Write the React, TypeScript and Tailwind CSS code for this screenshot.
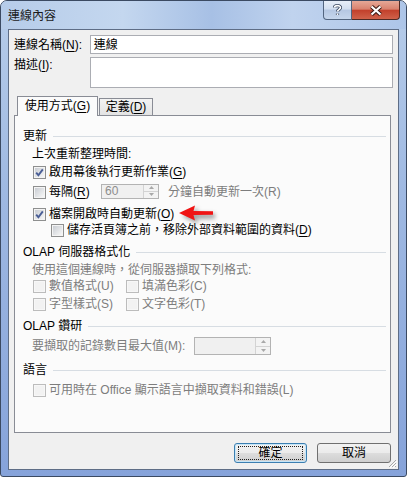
import React from "react";

function Mn({ children }: { children: React.ReactNode }) {
  return <span className="underline underline-offset-[2px]">{children}</span>;
}

function Box({ checked = false, disabled = false }: { checked?: boolean; disabled?: boolean }) {
  return (
    <span
      className={`flex h-[13px] w-[13px] shrink-0 items-center justify-center border bg-white ${
        disabled ? "border-[#bcbcbc]" : "border-[#8e8f8f]"
      }`}
    >
      <span
        className={`flex h-[11px] w-[11px] items-center justify-center border ${
          disabled
            ? "border-[#f7f7f7] bg-[#f2f2f2]"
            : "border-[#f4f4f4] bg-[linear-gradient(135deg,#c9cdd3,#f7f7f7)]"
        }`}
      >
        {checked ? (
          <svg width="9" height="9" viewBox="0 0 9 9">
            <path d="M1.2 4.6 L3.4 7.2 L7.8 1.4" stroke="#4a5e96" strokeWidth="1.9" fill="none" />
          </svg>
        ) : null}
      </span>
    </span>
  );
}

function Spin({ size, value }: { size: string; value?: string }) {
  return (
    <div className={`flex border border-[#b3b3b3] bg-[#f0f0f0] ${size}`}>
      <div className="flex flex-1 items-center pl-[3px] text-[#8d8d8d]">{value}</div>
      <div className="flex w-[15px] flex-col border-l border-[#d3d3d3] bg-[#f3f3f3]">
        <div className="flex flex-1 items-center justify-center border-b border-[#d3d3d3]">
          <svg width="5" height="3" viewBox="0 0 5 3">
            <path d="M0 3 L2.5 0 L5 3 Z" fill="#a8a8a8" />
          </svg>
        </div>
        <div className="flex flex-1 items-center justify-center">
          <svg width="5" height="3" viewBox="0 0 5 3">
            <path d="M0 0 L2.5 3 L5 0 Z" fill="#a8a8a8" />
          </svg>
        </div>
      </div>
    </div>
  );
}

function Group({ title, className = "" }: { title: string; className?: string }) {
  return (
    <div className={`flex h-[16px] items-center ${className}`}>
      <span>{title}</span>
      <span className="ml-[6px] mr-[4px] h-px flex-1 bg-[#d7dde3]" />
    </div>
  );
}

function CheckRow({
  checked,
  disabled,
  children,
  className = ""
}: {
  checked?: boolean;
  disabled?: boolean;
  children: React.ReactNode;
  className?: string;
}) {
  return (
    <div className={`flex h-[16px] items-center gap-[3px] ${disabled ? "text-[#7d7d7d]" : ""} ${className}`}>
      <Box checked={checked} disabled={disabled} />
      <span>{children}</span>
    </div>
  );
}

function DlgButton({ children, primary = false }: { children: React.ReactNode; primary?: boolean }) {
  return (
    <button
      type="button"
      className={`flex h-[20px] items-center justify-center rounded-[3px] border bg-[linear-gradient(#f2f2f2_0%,#ebebeb_50%,#dddddd_51%,#cfcfcf_100%)] ${
        primary ? "w-[73px] border-[#3c7fb1] shadow-[inset_0_0_0_1px_#c6e6f8]" : "w-[74px] border-[#707070]"
      }`}
    >
      {primary ? (
        <span className="flex h-[14px] w-[65px] items-center justify-center border border-dotted border-[#202020]">
          {children}
        </span>
      ) : (
        <span>{children}</span>
      )}
    </button>
  );
}

export default function App() {
  return (
    <div className="font-['Liberation_Sans','Noto_Sans_CJK_TC',sans-serif] text-[12px] leading-[14px] text-black">
      <div className="relative flex h-[477px] w-[407px] flex-col overflow-hidden rounded-t-[7px] rounded-b-[3px] border border-[#3b4a62] bg-[linear-gradient(180deg,#b7cdea_0%,#9fb9e2_40%,#86a3da_100%)]">
        {/* title bar */}
        <div className="flex h-[28px] shrink-0 items-start justify-between bg-[linear-gradient(90deg,#b6cce9_0%,#c4d7ef_30%,#a7c0e5_52%,#c0d3ee_72%,#adc5e8_100%)]">
          <span className="ml-[7px] mt-[8px] text-[12px] leading-[14px] text-[#1b1b1b]">連線內容</span>
          <div className="mr-[6px] flex h-[19px]">
            <div className="flex w-[29px] items-center justify-center rounded-bl-[4px] border border-t-0 border-[#53657f] bg-[linear-gradient(#e7eef8_0%,#d3dff0_45%,#b5c7e2_50%,#c6d6ec_100%)]">
              <svg width="9" height="12" viewBox="0 0 9 12">
                <path
                  d="M1.5 3.5 C1.5 1.2 7.5 0.8 7.5 3.6 C7.5 5.6 4.5 5.6 4.5 7.6 M4.5 9.6 L4.5 11"
                  stroke="#3a4860"
                  strokeWidth="3.2"
                  fill="none"
                />
                <path
                  d="M1.5 3.5 C1.5 1.2 7.5 0.8 7.5 3.6 C7.5 5.6 4.5 5.6 4.5 7.6 M4.5 9.6 L4.5 11"
                  stroke="#ffffff"
                  strokeWidth="1.6"
                  fill="none"
                />
              </svg>
            </div>
            <div className="flex w-[48px] items-center justify-center rounded-br-[4px] border border-l-0 border-t-0 border-[#4e2a24] bg-[linear-gradient(#e6a897_0%,#d9826f_45%,#c2412c_52%,#d0624a_100%)]">
              <svg width="14" height="11" viewBox="0 0 14 11">
                <path d="M2.5 1.5 L11.5 9.5 M11.5 1.5 L2.5 9.5" stroke="#3d1b16" strokeWidth="4.2" fill="none" />
                <path d="M2.5 1.5 L11.5 9.5 M11.5 1.5 L2.5 9.5" stroke="#ffffff" strokeWidth="2.2" fill="none" />
              </svg>
            </div>
          </div>
        </div>

        {/* client area */}
        <div className="relative mx-[7px] flex h-[441px] flex-col border border-[#5e6d86] bg-[#f0f0f0] px-[5px] pt-[5px]">
          <div className="flex items-center">
            <span className="w-[76px]">
              連線名稱(<Mn>N</Mn>):
            </span>
            <div className="flex h-[19px] w-[304px] items-center border border-[#abadb3] bg-white pl-[3px]">連線</div>
          </div>
          <div className="mt-[3px] flex items-start">
            <span className="mt-[1px] w-[76px]">
              描述(<Mn>I</Mn>):
            </span>
            <div className="h-[31px] w-[304px] border border-[#abadb3] bg-white" />
          </div>

          {/* tabs */}
          <div className="relative z-10 ml-[3px] mt-[8px] flex items-end">
            <div className="-mb-px flex h-[20px] w-[81px] items-center justify-center border border-b-0 border-[#898c95] bg-[#fbfbfb] pb-[1px]">
              使用方式(<Mn>G</Mn>)
            </div>
            <div className="ml-px flex h-[17px] w-[54px] items-center justify-center border border-b-0 border-[#898c95] bg-[linear-gradient(#f3f3f3,#e3e3e3)]">
              定義(<Mn>D</Mn>)
            </div>
          </div>
          <div className="flex h-[318px] w-[377px] flex-col border border-[#898c95] bg-[#fbfbfb] pl-[8px] pt-[12px]">
            <Group title="更新" />
            <div className="ml-[9px] mt-[2px] flex h-[16px] items-center">上次重新整理時間:</div>
            <CheckRow checked className="ml-[10px] mt-[2px]">
              啟用幕後執行更新作業(<Mn>G</Mn>)
            </CheckRow>
            <div className="ml-[10px] mt-[4px] flex h-[16px] items-center">
              <div className="flex w-[68px] items-center gap-[3px]">
                <Box />
                <span>
                  每隔(<Mn>R</Mn>)
                </span>
              </div>
              <Spin size="h-[15px] w-[58px] -mt-[2px]" value="60" />
              <span className="ml-[9px] text-[#7d7d7d]">分鐘自動更新一次(R)</span>
            </div>
            <CheckRow checked className="ml-[10px] mt-[6px]">
              檔案開啟時自動更新(<Mn>O</Mn>)
            </CheckRow>
            <CheckRow className="ml-[28px]">
              儲存活頁簿之前，移除外部資料範圍的資料(<Mn>D</Mn>)
            </CheckRow>

            <Group title="OLAP 伺服器格式化" className="mt-[6px]" />
            <div className="ml-[9px] mt-[2px] flex h-[16px] items-center text-[#7d7d7d]">
              使用這個連線時，從伺服器擷取下列格式:
            </div>
            <div className="ml-[10px] flex">
              <CheckRow disabled className="w-[93px]">
                數值格式(U)
              </CheckRow>
              <CheckRow disabled>填滿色彩(C)</CheckRow>
            </div>
            <div className="ml-[10px] mt-[2px] flex">
              <CheckRow disabled className="w-[93px]">
                字型樣式(S)
              </CheckRow>
              <CheckRow disabled>文字色彩(T)</CheckRow>
            </div>

            <Group title="OLAP 鑽研" className="mt-[6px]" />
            <div className="ml-[9px] mt-[3px] flex h-[18px] items-center">
              <span className="w-[162px] text-[#7d7d7d]">要擷取的記錄數目最大值(M):</span>
              <Spin size="h-[18px] w-[77px]" />
            </div>

            <Group title="語言" className="mt-[7px]" />
            <CheckRow disabled className="ml-[10px] mt-[4px]">
              可用時在 Office 顯示語言中擷取資料和錯誤(L)
            </CheckRow>
          </div>

          <div className="mt-[10px] flex justify-end gap-[10px] pr-[2px]">
            <DlgButton primary>確定</DlgButton>
            <DlgButton>取消</DlgButton>
          </div>

          {/* size grip */}
          <svg className="absolute bottom-[1px] right-[1px]" width="10" height="10" viewBox="0 0 10 10">
            <path d="M9 2 L2 9 M9 5 L5 9 M9 8 L8 9" stroke="#a8a8a8" strokeWidth="1" />
            <path d="M10 3 L3 10 M10 6 L6 10" stroke="#ffffff" strokeWidth="1" />
          </svg>
        </div>

        {/* red arrow annotation */}
        <svg className="absolute left-[174px] top-[201px]" width="48" height="26" viewBox="0 0 48 26">
          <defs>
            <filter id="sh" x="-20%" y="-40%" width="140%" height="180%">
              <feGaussianBlur stdDeviation="2" />
            </filter>
          </defs>
          <path d="M7 14 L23 6 L21.5 11 L40 11.5 L40 16.5 L21.5 17 L23 22 Z" fill="#5a5a5a" opacity="0.55" filter="url(#sh)" />
          <path d="M4 11 L20 3.5 L18.5 9 L38 9.3 L38 12.7 L18.5 13 L20 18.5 Z" fill="#f01414" />
        </svg>
      </div>
    </div>
  );
}
